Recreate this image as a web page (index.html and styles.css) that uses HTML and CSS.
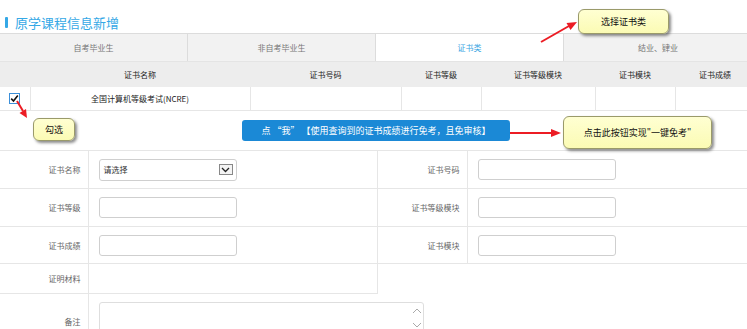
FILE: index.html
```html
<!DOCTYPE html>
<html lang="zh-CN">
<head>
  <meta charset="UTF-8">
  <meta name="viewport" content="width=device-width, initial-scale=1.0">
  <title>原学课程信息新增</title>
  <link rel="stylesheet" href="styles.css">
</head>
<body>
  <div class="page">
    <h2 class="title"><span class="title-bar"></span>原学课程信息新增</h2>

    <div class="tabs">
      <div class="tab">自考毕业生</div>
      <div class="tab">非自考毕业生</div>
      <div class="tab active">证书类</div>
      <div class="tab">结业、肄业</div>
    </div>

    <table class="cert-table">
      <colgroup>
        <col style="width:30px"><col style="width:220px"><col style="width:151px"><col style="width:80px">
        <col style="width:114px"><col style="width:80px"><col style="width:80px">
      </colgroup>
      <thead>
        <tr>
          <th></th>
          <th>证书名称</th>
          <th>证书号码</th>
          <th>证书等级</th>
          <th>证书等级模块</th>
          <th>证书模块</th>
          <th>证书成绩</th>
        </tr>
      </thead>
      <tbody>
        <tr>
          <td>
            <span class="check">
              <svg width="9" height="9" viewBox="0 0 9 9"><path d="M1.2 4.6 L3.5 7 L7.8 1.6" fill="none" stroke="#111" stroke-width="1.6"/></svg>
            </span>
          </td>
          <td>全国计算机等级考试(NCRE)</td>
          <td></td>
          <td></td>
          <td></td>
          <td></td>
          <td></td>
        </tr>
      </tbody>
    </table>

    <div class="actions">
      <button class="exempt-btn">点 “我” 【使用查询到的证书成绩进行免考，且免审核】</button>
    </div>

    <table class="form-table">
      <colgroup>
        <col style="width:88px"><col style="width:289px"><col style="width:90px"><col>
      </colgroup>
      <tr class="row-tall">
        <td class="label">证书名称</td>
        <td class="field">
          <div class="select">
            <span>请选择</span>
            <span class="select-arrow">
              <svg width="9" height="6" viewBox="0 0 9 6"><path d="M1 1 L4.5 4.5 L8 1" fill="none" stroke="#222" stroke-width="1.3"/></svg>
            </span>
          </div>
        </td>
        <td class="label">证书号码</td>
        <td class="field last"><input class="text-input" type="text"></td>
      </tr>
      <tr class="row-tall">
        <td class="label">证书等级</td>
        <td class="field"><input class="text-input" type="text"></td>
        <td class="label">证书等级模块</td>
        <td class="field last"><input class="text-input" type="text"></td>
      </tr>
      <tr class="row-mid">
        <td class="label">证书成绩</td>
        <td class="field"><input class="text-input" type="text"></td>
        <td class="label">证书模块</td>
        <td class="field last"><input class="text-input" type="text"></td>
      </tr>
      <tr class="row-short">
        <td class="label">证明材料</td>
        <td class="field"></td>
        <td class="empty"></td>
        <td class="empty"></td>
      </tr>
      <tr class="row-remark">
        <td class="label">备注</td>
        <td class="field last" colspan="3">
          <div class="remark">
            <span class="scroll">
              <svg width="10" height="22" viewBox="0 0 10 22"><path d="M1 6 L5 2 L9 6" fill="none" stroke="#aaa" stroke-width="1"/><path d="M1 16 L5 20 L9 16" fill="none" stroke="#aaa" stroke-width="1"/></svg>
            </span>
          </div>
        </td>
      </tr>
    </table>

    <!-- help notes drawn over the page -->
    <svg class="arrows" width="747" height="329" viewBox="0 0 747 329">
      <g fill="#ec1c24" stroke="#ec1c24">
        <line x1="541" y1="42" x2="569" y2="26" stroke-width="2"/>
        <polygon points="577,22 570.5,30 566.5,23" stroke="none"/>
        <line x1="17" y1="101" x2="23" y2="111" stroke-width="2"/>
        <polygon points="27,118 19.5,113 26,109" stroke="none"/>
        <line x1="510" y1="133" x2="552" y2="133" stroke-width="2"/>
        <polygon points="561,133 551,129 551,137" stroke="none"/>
      </g>
    </svg>
    <div class="note note-type">选择证书类</div>
    <div class="note note-check">勾选</div>
    <div class="note note-exempt">点击此按钮实现"一键免考"</div>
  </div>
</body>
</html>
```

FILE: styles.css
```css
body {
  margin: 0;
  padding: 0;
  background: #fff;
  font-family: "Noto Sans CJK SC", "Noto Sans", sans-serif;
  overflow: hidden;
}

.page {
  position: relative;
  width: 752px;
  height: 329px;
  overflow: hidden;
}

.title {
  margin: 0;
  height: 33px;
  box-sizing: border-box;
  padding: 11px 0 0 5px;
  display: flex;
  align-items: center;
  gap: 7px;
  font-size: 13px;
  line-height: 17px;
  font-weight: normal;
  color: #35a8e6;
}

.title-bar {
  width: 3px;
  height: 11px;
  border-radius: 1px;
  background: #35a8e6;
}

/* Tabs */
.tabs {
  display: flex;
  width: 752px;
  border-top: 1px solid #dcdcdc;
  border-bottom: 1px solid #e4e4e4;
}

.tab {
  width: 188px;
  height: 27px;
  box-sizing: border-box;
  line-height: 27px;
  text-align: center;
  font-size: 8px;
  color: #777;
  background: #f2f2f2;
  border-right: 1px solid #dcdcdc;
}

.tab:last-child {
  border-right: none;
}

.tab.active {
  background: #fff;
  color: #3aa6e3;
}

/* Certificate list */
.cert-table {
  width: 755px;
  table-layout: fixed;
  border-collapse: collapse;
  font-size: 8px;
  color: #222;
}

.cert-table th {
  height: 25px;
  padding: 0;
  background: #ededed;
  font-weight: normal;
  text-align: center;
}

.cert-table td {
  height: 23px;
  padding: 0;
  text-align: center;
  border-left: 1px solid #e6e6e6;
  border-bottom: 1px solid #e6e6e6;
}

.cert-table td:first-child {
  border-left: none;
}

.check {
  display: inline-flex;
  align-items: center;
  justify-content: center;
  width: 9px;
  height: 9px;
  border: 1px solid #3b8fd9;
  background: #fff;
  vertical-align: middle;
  margin-top: -2px;
}

/* One-click exemption */
.actions {
  height: 39px;
  box-sizing: border-box;
  padding-top: 9px;
  display: flex;
  justify-content: center;
}

.exempt-btn {
  width: 268px;
  height: 21px;
  padding: 0;
  border: none;
  border-radius: 3px;
  background: #1b89d6;
  color: #fff;
  font-family: inherit;
  font-size: 9px;
}

/* Form */
.form-table {
  width: 752px;
  table-layout: fixed;
  border-collapse: collapse;
  border-top: 1px solid #e6e6e6;
  font-size: 8px;
}

.form-table td {
  padding: 0;
  border-bottom: 1px solid #e6e6e6;
  border-right: 1px solid #e6e6e6;
}

.form-table td.last {
  border-right: none;
}

.form-table td.empty {
  border: none;
}

.row-tall td { height: 37px; }
.row-mid td { height: 36px; }
.row-short td { height: 29px; }
.row-remark td { height: 54px; }

.label {
  text-align: right;
  padding-right: 7px !important;
  color: #666;
}

.field {
  padding-left: 10px !important;
}

.text-input {
  display: block;
  width: 138px;
  height: 21px;
  box-sizing: border-box;
  margin: 0;
  border: 1px solid #cfcfcf;
  border-radius: 3px;
  background: #fff;
}

.select {
  width: 138px;
  height: 22px;
  box-sizing: border-box;
  border: 1px solid #cfcfcf;
  border-radius: 3px;
  display: flex;
  align-items: center;
  justify-content: space-between;
  padding: 0 3px 0 4px;
  color: #333;
  font-size: 8px;
}

.select-arrow {
  width: 14px;
  height: 11px;
  box-sizing: border-box;
  border: 1px solid #888;
  background: #f4f4f4;
  display: flex;
  align-items: center;
  justify-content: center;
}

.remark {
  width: 325px;
  height: 38px;
  box-sizing: border-box;
  border: 1px solid #dedede;
  border-radius: 3px;
  display: flex;
  justify-content: flex-end;
  padding: 4px 0 0 0;
}

.scroll {
  width: 10px;
  margin-right: 1px;
}

/* Help callouts */
.arrows {
  position: absolute;
  top: 0;
  left: 0;
  pointer-events: none;
}

.note {
  position: absolute;
  box-sizing: border-box;
  display: flex;
  align-items: center;
  justify-content: center;
  background: linear-gradient(#ffffd2, #fbfbb4);
  border: 1px solid #9a9a6a;
  border-radius: 6px;
  box-shadow: 2px 2px 3px rgba(0, 0, 0, 0.45);
  font-size: 9px;
  color: #111;
}

.note-type {
  left: 578px;
  top: 9px;
  width: 91px;
  height: 25px;
}

.note-check {
  left: 33px;
  top: 118px;
  width: 42px;
  height: 23px;
}

.note-exempt {
  left: 563px;
  top: 116px;
  width: 149px;
  height: 33px;
}
```
